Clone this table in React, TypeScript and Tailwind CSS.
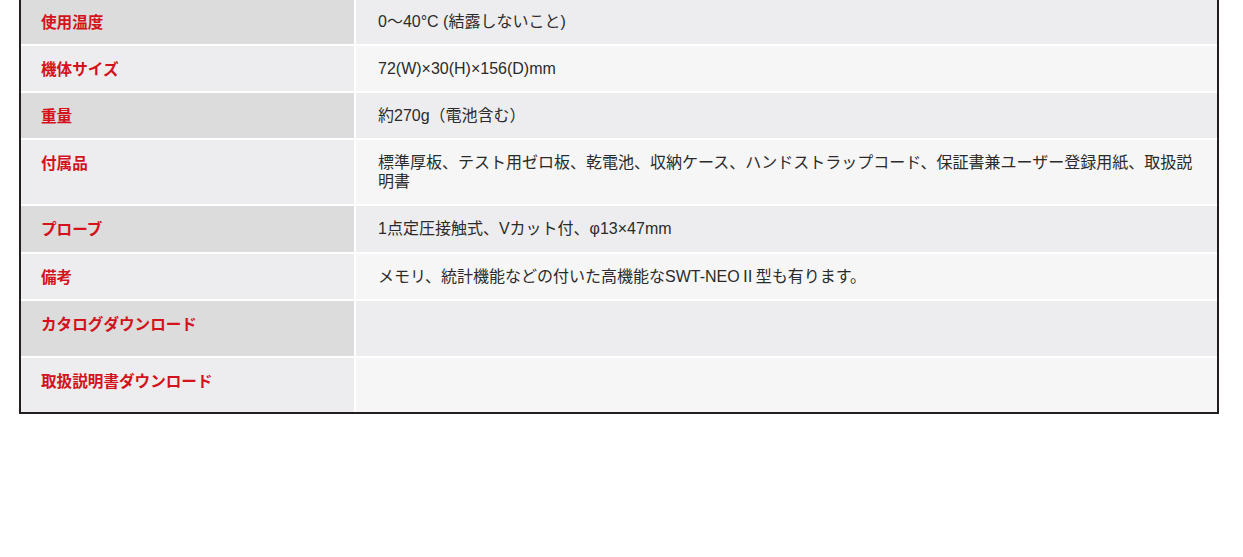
import React from "react";

type Row = { label: string; value: string; h?: string };

const rows: Row[] = [
  { label: "使用温度", value: "0〜40°C (結露しないこと)" },
  { label: "機体サイズ", value: "72(W)×30(H)×156(D)mm" },
  { label: "重量", value: "約270g（電池含む）" },
  {
    label: "付属品",
    value:
      "標準厚板、テスト用ゼロ板、乾電池、収納ケース、ハンドストラップコード、保証書兼ユーザー登録用紙、取扱説明書",
  },
  { label: "プローブ", value: "1点定圧接触式、Vカット付、φ13×47mm", h: "h-[46px]" },
  { label: "備考", value: "メモリ、統計機能などの付いた高機能なSWT-NEOⅡ型も有ります。" },
  { label: "カタログダウンロード", value: "", h: "h-[55px]" },
  { label: "取扱説明書ダウンロード", value: "", h: "h-[54px]" },
];

export default function App() {
  return (
    <div className="w-[1243px] h-[557px] bg-white overflow-hidden">
      <div className="ml-[19px] mt-[-1px] w-[1200px] border-2 border-t-0 border-[#231f20] bg-white">
        <div className="grid grid-cols-[333px_861px] gap-x-[2px] gap-y-[2px]">
          {rows.map((r, i) => {
            const odd = i % 2 === 0;
            return (
              <React.Fragment key={i}>
                <div
                  className={`${odd ? "bg-[#dcdcdc]" : "bg-[#ededef]"} ${r.h ?? ""} pl-[20px] pr-[16px] py-[13px] text-[15.6px] leading-[19px] font-bold text-[#d3121c]`}
                  style={{ fontFamily: '"Noto Sans CJK JP", "Liberation Sans", sans-serif' }}
                >
                  {r.label}
                </div>
                <div
                  className={`${odd ? "bg-[#ededef]" : "bg-[#f6f6f6]"} ${r.h ?? ""} pl-[22px] pr-[18px] py-[13px] text-[16px] leading-[19px] text-[#2b2b2b]`}
                  style={{ fontFamily: '"Liberation Sans", "Noto Sans CJK JP", sans-serif' }}
                >
                  {r.value}
                </div>
              </React.Fragment>
            );
          })}
        </div>
      </div>
    </div>
  );
}
